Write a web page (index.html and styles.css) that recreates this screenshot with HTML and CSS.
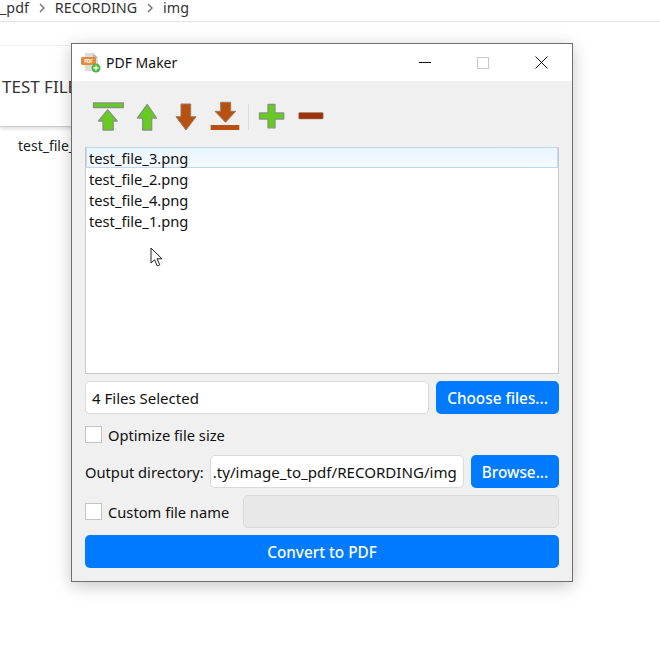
FILE: index.html
```html
<!DOCTYPE html>
<html lang="en">
<head>
  <meta charset="UTF-8" />
  <title>PDF Maker</title>
  <link rel="stylesheet" href="styles.css">
</head>
<body>
  <div class="breadcrumb">
    <span>_pdf</span>
    <svg class="chevron" width="6" height="10" viewBox="0 0 6 10"><path d="M1 1l4 4-4 4" /></svg>
    <span>RECORDING</span>
    <svg class="chevron" width="6" height="10" viewBox="0 0 6 10"><path d="M1 1l4 4-4 4" /></svg>
    <span>img</span>
  </div>
  <div class="doc-card">TEST FILE</div>
  <div class="doc-name">test_file_3.png</div>

  <div class="window">
    <div class="titlebar">
      <svg class="app-icon" width="20" height="21" viewBox="0 0 20 21">
        <path d="M4 1h8l5 5v13H4z" fill="#dcdcdc" />
        <path d="M12 1l5 5h-5z" fill="#b5b5b5" />
        <rect x="0" y="5" width="15" height="8" rx="1.5" fill="#e58a3c" />
        <text x="7.5" y="11" class="app-icon-text">PDF</text>
        <circle cx="15" cy="16" r="4.5" fill="#4fbb3c" />
        <path d="M15 13.500v5M12.500 16h5" stroke="#fff" stroke-width="1.300" />
      </svg>
      <span class="title">PDF Maker</span>
      <div class="win-controls">
        <svg class="win-btn" width="12" height="12" viewBox="0 0 12 12"><path d="M0 5.500h12" stroke="#111" /></svg>
        <svg class="win-btn" width="12" height="12" viewBox="0 0 12 12"><rect x="0.500" y="0.500" width="11" height="11" fill="none" stroke="#c8c8c8" /></svg>
        <svg class="win-btn" width="13" height="13" viewBox="0 0 13 13"><path d="M0.500 0.500l12 12M12.500 0.500l-12 12" stroke="#111" /></svg>
      </div>
    </div>

    <div class="content">
      <div class="toolbar">
        <svg class="tool" width="32" height="32" viewBox="0 0 32 32">
          <rect class="green" x="1.500" y="2" width="30" height="4.500" />
          <path class="green" d="M15.700 8.800L25.200 20H21.200V29H11V20H6.500z" />
        </svg>
        <svg class="tool" width="32" height="32" viewBox="0 0 32 32">
          <path class="green" d="M16.300 3.500L25.500 17H20.700V29H11.700V17H6.500z" />
        </svg>
        <svg class="tool" width="32" height="32" viewBox="0 0 32 32">
          <path class="brown" d="M11 3H20.700V15.700H26L16 29L6 15.700H11z" />
        </svg>
        <svg class="tool" width="32" height="32" viewBox="0 0 32 32">
          <path class="brown" d="M11.700 1.300H21.700V10.300H26.700L16.500 21.300L6 10.300H11.700z" />
          <rect x="1.700" y="24" width="28.600" height="5" fill="#b8500f" />
        </svg>
        <div class="tool-sep"></div>
        <svg class="tool" width="32" height="32" viewBox="0 0 32 32">
          <path class="green" d="M12 3.500H19V12H27.700V18H19V26.800H12V18H3.500V12H12z" />
        </svg>
        <svg class="tool" width="32" height="32" viewBox="0 0 32 32">
          <rect x="3.700" y="11.500" width="24.500" height="6.500" rx="1" fill="#a13208" stroke="#8f8f7f" stroke-width="0.500" />
        </svg>
      </div>

      <ul class="file-list">
        <li class="selected">test_file_3.png</li>
        <li>test_file_2.png</li>
        <li>test_file_4.png</li>
        <li>test_file_1.png</li>
      </ul>

      <div class="row">
        <div class="field grow">4 Files Selected</div>
        <button class="btn choose">Choose files...</button>
      </div>
      <div class="row check-row">
        <span class="checkbox"></span>
        <span>Optimize file size</span>
      </div>
      <div class="row">
        <span class="out-label">Output directory:</span>
        <div class="field grow path">.ty/image_to_pdf/RECORDING/img</div>
        <button class="btn browse">Browse...</button>
      </div>
      <div class="row">
        <span class="checkbox"></span>
        <span class="custom-label">Custom file name</span>
        <div class="field grow disabled"></div>
      </div>
      <button class="btn convert">Convert to PDF</button>
    </div>
  </div>

  <svg class="cursor" width="14" height="20" viewBox="0 0 14 20">
    <path d="M1 1V16L4.500 12.800L7.300 19L9.800 17.800L7 11.800H12z" fill="#fff" stroke="#222" stroke-width="1" />
  </svg>
</body>
</html>
```

FILE: styles.css
```css
html, body {
  height: 100%;
}

body {
  margin: 0;
  position: relative;
  overflow: hidden;
  background: #fff;
  color: #111;
  font-family: "Noto Sans", "Open Sans", sans-serif;
  font-size: 14.700px;
}

.breadcrumb {
  height: 22px;
  box-sizing: border-box;
  border-bottom: 1px solid #e3e3e3;
  padding-top: 1px;
  display: flex;
  align-items: flex-start;
  gap: 10px;
  font-size: 14.300px;
  line-height: 13px;
  color: #333;
}

.chevron {
  margin-top: 2px;
}

.chevron path {
  fill: none;
  stroke: #777;
  stroke-width: 1.500;
}

.doc-card {
  margin-top: 23px;
  height: 82px;
  width: 220px;
  box-sizing: border-box;
  padding-left: 2px;
  display: flex;
  align-items: center;
  border-top: 1px solid #f0f0f0;
  border-bottom: 1px solid #ccc;
  box-shadow: 0 2px 3px rgba(0, 0, 0, 0.12);
  font-size: 17px;
  color: #333;
}

.doc-name {
  margin: 9px 0 0 18px;
  font-size: 14px;
  color: #222;
}

.window {
  position: absolute;
  left: 71px;
  top: 43px;
  width: 502px;
  height: 539px;
  box-sizing: border-box;
  border: 1px solid #6e6e6e;
  background: #f0f0f0;
  box-shadow: 0 4px 16px rgba(0, 0, 0, 0.22);
}

.titlebar {
  height: 37px;
  background: #fff;
  display: flex;
  align-items: center;
  padding-left: 9px;
}

.app-icon-text {
  font-size: 4.500px;
  font-weight: 700;
  fill: #fff;
  text-anchor: middle;
}

.title {
  margin-left: 5px;
  font-size: 14px;
}

.win-controls {
  margin-left: auto;
  display: flex;
  align-items: center;
  gap: 46px;
  padding-right: 24px;
}

.content {
  padding: 20px 13px 0;
  display: flex;
  flex-direction: column;
}

.toolbar {
  height: 32px;
  padding-left: 7px;
  display: flex;
  gap: 7px;
}

.tool {
  flex: none;
}

.green {
  fill: #66cc22;
  stroke: #84967a;
  stroke-width: 1.300;
  stroke-linejoin: round;
}

.brown {
  fill: #b8500f;
  stroke: #9a7a60;
  stroke-width: 1;
}

.tool-sep {
  width: 1px;
  margin: 3px 0;
  background: #dcdcdc;
}

.file-list {
  list-style: none;
  margin: 14px 0 7px;
  padding: 0;
  height: 227px;
  box-sizing: border-box;
  background: #fff;
  border: 1px solid #c9c9c9;
}

.file-list li {
  height: 21px;
  line-height: 23px;
  padding-left: 3px;
  box-sizing: border-box;
}

.file-list li.selected {
  margin-top: -1px;
  border: 1px solid #bcd9f0;
  padding-left: 2px;
  line-height: 21px;
  background: linear-gradient(#eaf5fd, #f4faff);
}

.row {
  display: flex;
  align-items: center;
  height: 33px;
  margin-bottom: 7px;
}

.check-row {
  height: 27px;
}

.field {
  height: 33px;
  box-sizing: border-box;
  background: #fff;
  border: 1px solid #dadada;
  border-radius: 5px;
  padding: 0 6px;
  font-size: 15px;
  line-height: 32px;
  white-space: nowrap;
  overflow: hidden;
}

.grow {
  flex: 1;
  min-width: 0;
}

.path {
  font-size: 15.100px;
  margin-left: 6px;
  padding: 0 7px 0 2px;
}

.disabled {
  background: #e8e8e8;
  margin-left: 14px;
}

.btn {
  height: 33px;
  border: none;
  border-radius: 5px;
  background: #007bff;
  color: #fff;
  font-family: inherit;
  font-size: 15.300px;
  font-weight: 500;
  padding: 0;
}

.choose {
  width: 123px;
  margin-left: 7px;
}

.browse {
  width: 88px;
  margin-left: 7px;
}

.convert {
  width: 100%;
}

.checkbox {
  flex: none;
  width: 15px;
  height: 15px;
  background: #fff;
  border: 1px solid #c4c4c4;
  margin-right: 6px;
}

.cursor {
  position: absolute;
  left: 150px;
  top: 247px;
}
```
